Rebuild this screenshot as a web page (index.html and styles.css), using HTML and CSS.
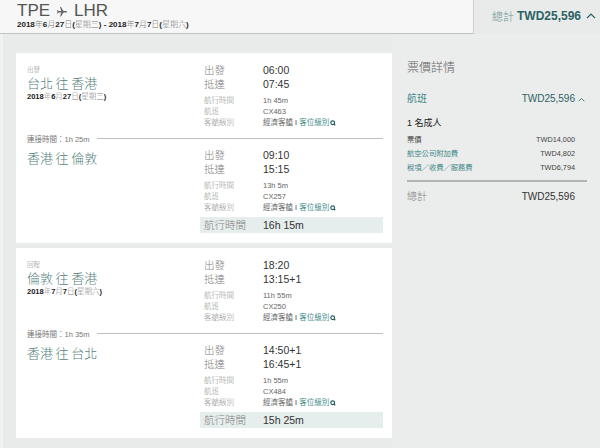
FILE: index.html
```html
<!DOCTYPE html>
<html lang="zh-Hant">
<head>
<meta charset="utf-8">
<title>TPE - LHR</title>
<link rel="stylesheet" href="styles.css">
</head>
<body>
<div class="topbar">
  <div class="trip">
    <div class="trip-title">TPE <svg class="plane" viewBox="0 0 24 24"><path transform="rotate(90 12 12)" d="M21 16v-2l-8-5V3.5c0-.83-.67-1.5-1.5-1.5S10 2.670 10 3.5V9l-8 5v2l8-2.5V19l-2 1.5V22l3.5-1 3.5 1v-1.5L13 19v-5.5l8 2.5z"/></svg> LHR</div>
    <div class="trip-date"><b>2018</b>年<b>6</b>月<b>27</b>日<b>(</b>星期三<b>)</b> <b>-</b> <b>2018</b>年<b>7</b>月<b>7</b>日<b>(</b>星期六<b>)</b></div>
  </div>
  <div class="grand">
    <span class="grand-label">總計</span>
    <span class="grand-value">TWD25,596</span>
    <svg class="caret" viewBox="0 0 10 7"><polyline points="1,6 5,2 9,6"/></svg>
  </div>
</div>

<div class="main">
  <div class="left">
    <div class="card">
      <div class="seg">
        <div class="seg-l">
          <div class="leg-label">出發</div>
          <div class="route">台北 往 香港</div>
          <div class="leg-date"><b>2018</b>年<b>6</b>月<b>27</b>日<b>(</b>星期三<b>)</b></div>
        </div>
        <div class="seg-r">
          <div class="tr"><span class="tl">出發</span><span class="tv">06:00</span></div>
          <div class="tr"><span class="tl">抵達</span><span class="tv">07:45</span></div>
          <div class="info">
            <div class="ir"><span class="il">航行時間</span><span class="iv">1h 45m</span></div>
            <div class="ir"><span class="il">航班</span><span class="iv">CX463</span></div>
            <div class="ir"><span class="il">客艙級別</span><span class="iv">經濟客艙 <span class="bar-sep">I</span> <span class="link">客位級別</span><svg class="q" viewBox="0 0 8 8"><circle cx="3.6" cy="3.6" r="2.5"/><line x1="5.2" y1="5.2" x2="7" y2="7"/></svg></span></div>
          </div>
        </div>
      </div>
      <div class="conn"><span>連接時間：1h 25m</span><i></i></div>
      <div class="seg">
        <div class="seg-l">
          <div class="route route-2">香港 往 倫敦</div>
        </div>
        <div class="seg-r">
          <div class="tr"><span class="tl">出發</span><span class="tv">09:10</span></div>
          <div class="tr"><span class="tl">抵達</span><span class="tv">15:15</span></div>
          <div class="info">
            <div class="ir"><span class="il">航行時間</span><span class="iv">13h 5m</span></div>
            <div class="ir"><span class="il">航班</span><span class="iv">CX257</span></div>
            <div class="ir"><span class="il">客艙級別</span><span class="iv">經濟客艙 <span class="bar-sep">I</span> <span class="link">客位級別</span><svg class="q" viewBox="0 0 8 8"><circle cx="3.6" cy="3.6" r="2.5"/><line x1="5.2" y1="5.2" x2="7" y2="7"/></svg></span></div>
          </div>
        </div>
      </div>
      <div class="total"><span class="tl">航行時間</span><span class="tv">16h 15m</span></div>
    </div>

    <div class="card">
      <div class="seg">
        <div class="seg-l">
          <div class="leg-label">回程</div>
          <div class="route">倫敦 往 香港</div>
          <div class="leg-date"><b>2018</b>年<b>7</b>月<b>7</b>日<b>(</b>星期六<b>)</b></div>
        </div>
        <div class="seg-r">
          <div class="tr"><span class="tl">出發</span><span class="tv">18:20</span></div>
          <div class="tr"><span class="tl">抵達</span><span class="tv">13:15+1</span></div>
          <div class="info">
            <div class="ir"><span class="il">航行時間</span><span class="iv">11h 55m</span></div>
            <div class="ir"><span class="il">航班</span><span class="iv">CX250</span></div>
            <div class="ir"><span class="il">客艙級別</span><span class="iv">經濟客艙 <span class="bar-sep">I</span> <span class="link">客位級別</span><svg class="q" viewBox="0 0 8 8"><circle cx="3.6" cy="3.6" r="2.5"/><line x1="5.2" y1="5.2" x2="7" y2="7"/></svg></span></div>
          </div>
        </div>
      </div>
      <div class="conn"><span>連接時間：1h 35m</span><i></i></div>
      <div class="seg">
        <div class="seg-l">
          <div class="route route-2">香港 往 台北</div>
        </div>
        <div class="seg-r">
          <div class="tr"><span class="tl">出發</span><span class="tv">14:50+1</span></div>
          <div class="tr"><span class="tl">抵達</span><span class="tv">16:45+1</span></div>
          <div class="info">
            <div class="ir"><span class="il">航行時間</span><span class="iv">1h 55m</span></div>
            <div class="ir"><span class="il">航班</span><span class="iv">CX484</span></div>
            <div class="ir"><span class="il">客艙級別</span><span class="iv">經濟客艙 <span class="bar-sep">I</span> <span class="link">客位級別</span><svg class="q" viewBox="0 0 8 8"><circle cx="3.6" cy="3.6" r="2.5"/><line x1="5.2" y1="5.2" x2="7" y2="7"/></svg></span></div>
          </div>
        </div>
      </div>
      <div class="total"><span class="tl">航行時間</span><span class="tv">15h 25m</span></div>
    </div>
  </div>

  <div class="panel">
    <div class="panel-title">票價詳情</div>
    <div class="p-flight"><span>航班</span><span class="p-flight-v">TWD25,596 <svg class="caret-s" viewBox="0 0 10 7"><polyline points="1,6 5,2 9,6"/></svg></span></div>
    <div class="p-pax">1 名成人</div>
    <div class="p-rows">
      <div class="p-row"><span>票價</span><span>TWD14,000</span></div>
      <div class="p-row"><span class="link">航空公司附加費</span><span>TWD4,802</span></div>
      <div class="p-row"><span class="link">稅項／收費／服務費</span><span>TWD6,794</span></div>
    </div>
    <div class="p-rule"></div>
    <div class="p-total"><span class="p-total-l">總計</span><span>TWD25,596</span></div>
  </div>
</div>
</body>
</html>
```

FILE: styles.css
```css
html, body {
  margin: 0;
  padding: 0;
}
body {
  width: 600px;
  height: 448px;
  overflow: hidden;
  background: #e9eaea;
  font-family: "Liberation Sans", "Noto Sans CJK TC", sans-serif;
  color: #333;
}
b { font-weight: 700; }

.topbar {
  display: flex;
  height: 34px;
}
.trip {
  width: 474px;
  height: 34px;
  box-sizing: border-box;
  background: #f7f7f7;
  border-bottom: 1px solid #c2c2c2;
  border-right: 1px solid #cfcfcf;
  padding: 1px 0 0 17px;
}
.trip-title {
  font-size: 17px;
  line-height: 20px;
  color: #555;
  display: flex;
  align-items: center;
  gap: 5px;
}
.plane {
  width: 12px;
  height: 12px;
  fill: #666;
  margin: 1px 1px 0;
}
.trip-date {
  font-size: 8px;
  line-height: 10px;
  color: #777;
  margin-top: -1px;
  font-weight: 300;
}
.trip-date b { color: #222; font-weight: 700; }

.grand {
  flex: 1;
  display: flex;
  align-items: center;
  justify-content: flex-end;
  padding: 0 4px 3px 0;
  gap: 3px;
}
.grand-label {
  font-size: 11px;
  color: #6a9896;
  font-weight: 300;
}
.grand-value {
  font-size: 12px;
  font-weight: 700;
  color: #2b6364;
}
.caret {
  width: 10px;
  height: 7px;
  fill: none;
  stroke: #2b6364;
  stroke-width: 1.2;
  margin-left: 2px;
}

.main {
  display: flex;
}
.left {
  width: 392px;
  box-sizing: border-box;
  padding: 19px 0 0 13px;
  border-left: 3px solid #f2f2f2;
}
.card {
  width: 376px;
  box-sizing: border-box;
  background: #fff;
  padding: 10px 9px 10px 11px;
  margin-bottom: 5px;
}
.seg {
  display: grid;
  grid-template-columns: 173px 183px;
}
.leg-label {
  font-size: 6.5px;
  line-height: 13px;
  color: #888;
  font-weight: 300;
}
.route {
  font-size: 13px;
  line-height: 15px;
  color: #557f7d;
  word-spacing: -1px;
  font-weight: 300;
}
.route-2 {
  padding-top: 3px;
  line-height: 16px;
}
.leg-date {
  font-size: 7.5px;
  line-height: 12px;
  color: #777;
  font-weight: 300;
}
.leg-date b { color: #222; font-weight: 700; }

.seg-r {
  padding-left: 4px;
}
.tr, .total {
  display: grid;
  grid-template-columns: 59px 1fr;
  font-size: 10.5px;
  line-height: 14px;
}
.tl { color: #808080; font-weight: 300; }
.tv { color: #333; }
.info {
  margin-top: 4px;
}
.ir {
  display: grid;
  grid-template-columns: 59px 1fr;
  font-size: 7.5px;
  line-height: 11px;
}
.il { color: #8a8a8a; font-weight: 300; }
.iv { color: #666; white-space: nowrap; }
.bar-sep { color: #333; font-size: 7px; }
.link { color: #3f8a88; }
.q {
  width: 6px;
  height: 6px;
  fill: none;
  stroke: #2a5e5e;
  stroke-width: 1.6;
  margin-left: 1px;
  vertical-align: -0.5px;
}

.conn {
  display: flex;
  align-items: center;
  height: 12px;
  margin: 4px 0;
  font-size: 7.5px;
  color: #777;
}
.conn i {
  flex: 1;
  height: 1px;
  background: #bdbdbd;
  margin-left: 7px;
}

.total {
  margin: 4px 0 0 173px;
  padding-left: 4px;
  background: #e6eded;
  line-height: 16px;
}

.panel {
  width: 208px;
  box-sizing: border-box;
  padding: 26px 25px 0 15px;
  background: #ebecec;
  height: 414px;
}
.panel-title {
  font-size: 12px;
  line-height: 16px;
  color: #666;
  font-weight: 300;
}
.p-flight {
  display: flex;
  justify-content: space-between;
  align-items: center;
  margin: 16px -10px 0 0;
  font-size: 10px;
  line-height: 14px;
  color: #3f8a88;
}
.p-flight-v {
  color: #2b6364;
  display: flex;
  align-items: center;
  gap: 3px;
}
.caret-s {
  width: 7px;
  height: 5px;
  fill: none;
  stroke: #2b6364;
  stroke-width: 1.2;
}
.p-pax {
  margin-top: 11px;
  font-size: 9px;
  line-height: 12px;
  color: #222;
}
.p-rows {
  margin-top: 4px;
}
.p-row {
  display: flex;
  justify-content: space-between;
  font-size: 7.3px;
  line-height: 14px;
  color: #444;
}
.p-rule {
  margin: 5px -12px 0 0;
  height: 2px;
  background: #b5b5b5;
}
.p-total {
  display: flex;
  justify-content: space-between;
  margin-top: 8px;
  font-size: 10px;
  line-height: 14px;
  color: #333;
}
.p-total-l { color: #808080; font-weight: 300; }
```
